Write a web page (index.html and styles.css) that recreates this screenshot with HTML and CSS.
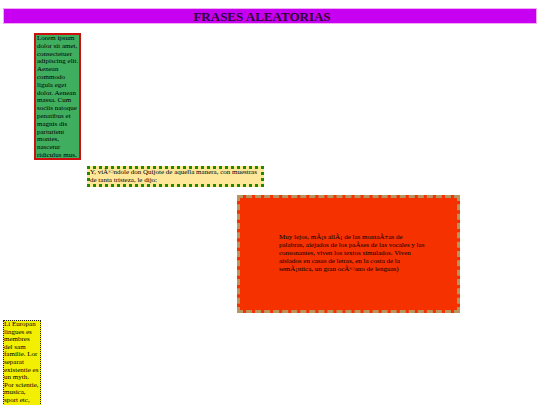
FILE: index.html
```html
<!DOCTYPE html>
<html lang="es">
<head>
<meta charset="utf-8">
<title>Frases aleatorias</title>
<link rel="stylesheet" href="styles.css">
</head>
<body>
<h1 class="titulo">FRASES ALEATORIAS</h1>
<div class="caja verde">Lorem ipsum dolor sit amet, consectetuer adipiscing elit. Aenean commodo ligula eget dolor. Aenean massa. Cum sociis natoque penatibus et magnis dis parturient montes, nascetur ridiculus mus.</div>
<div class="caja amarilla">Y, viÃ©ndole don Quijote de aquella manera, con muestras de tanta tristeza, le dijo:</div>
<div class="caja roja"><p class="texto-rojo">Muy lejos, mÃ¡s allÃ¡ de las montaÃ±as de palabras, alejados de los paÃ&shy;ses de las vocales y las consonantes, viven los textos simulados. Viven aislados en casas de letras, en la costa de la semÃ¡ntica, un gran ocÃ©ano de lenguas)</p></div>
<div class="caja limon">Li Europan lingues es membres del sam familie. Lor separat existentie es un myth. Por scientie, musica, sport etc,</div>
</body>
</html>
```
FILE: styles.css
```css
html, body {
  margin: 0;
  padding: 0;
  background: #ffffff;
}
body {
  padding: 8px 3px 0 3px;
  font-family: "Liberation Serif", "Times New Roman", serif;
  color: #000;
}
.titulo {
  margin: 0;
  height: 16px;
  line-height: 15px;
  font-size: 13px;
  font-weight: bold;
  text-align: center;
  background: #c800f2;
  border: 1px solid #f2a8f2;
  box-sizing: border-box;
  color: #2a0036;
  padding-right: 16px;
}
.caja {
  box-sizing: border-box;
  font-size: 7px;
  line-height: 7.8px;
}
.verde {
  margin: 9px 0 0 31px;
  width: 47px;
  height: 127px;
  background: #3fae5e;
  border: 2px solid #cc1010;
  padding: 0 0 0 1px;
}
.amarilla {
  margin: 6px 0 0 84px;
  width: 177px;
  height: 21px;
  background: #ffe79a;
  border: 3px dotted #1d8c00;
  padding: 0;
  line-height: 7.6px;
}
.roja {
  margin: 8px 0 0 234px;
  width: 223px;
  height: 118px;
  background: #f53100;
  border: 3px dashed #b8955e;
  padding: 35px 30px 0 39px;
}
.texto-rojo {
  margin: 0;
  line-height: 8px;
}
.limon {
  margin: 7px 0 0 0;
  width: 37.8px;
  height: 100px;
  background: #f2f000;
  border: 1.5px dotted #222;
  padding: 0;
  line-height: 7.6px;
}
```
